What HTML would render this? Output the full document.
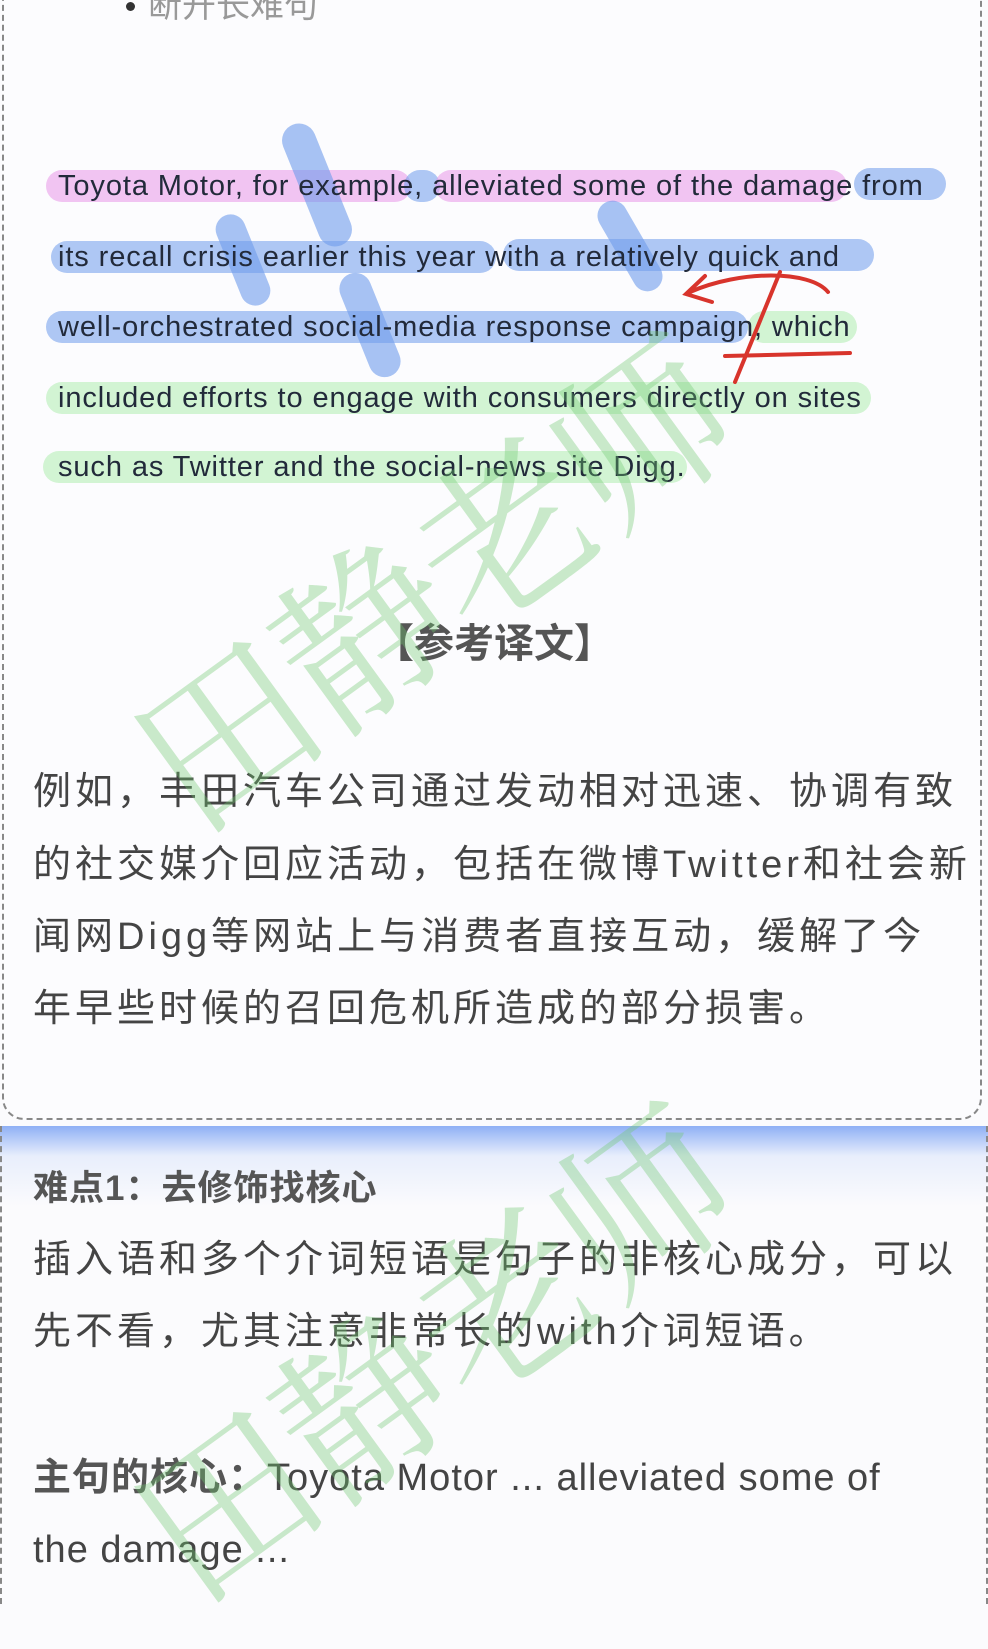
<!DOCTYPE html>
<html><head><meta charset="utf-8"><style>
body{margin:0;width:988px;height:1604px;overflow:hidden;background:#fbfbfd;position:relative;font-family:"Liberation Sans","Noto Sans CJK SC",sans-serif;}
.a{position:absolute;}
.card{left:2px;top:-20px;width:980px;height:1140px;border:2px dashed #888;border-top:none;border-radius:0 0 22px 22px;background:#fcfcfe;box-sizing:border-box;}
.hl{position:absolute;height:32px;border-radius:16px;}
.p{background:rgba(232,150,232,.55);}
.b{background:rgba(110,155,235,.55);}
.g{background:rgba(160,235,160,.45);}
.en{position:absolute;left:58px;font-size:29px;color:#222a3a;white-space:nowrap;letter-spacing:.9px;line-height:34px;}
.zh{position:absolute;left:33px;font-size:38px;color:#444;letter-spacing:4px;white-space:nowrap;line-height:46px;}
.sec{left:0;top:1126px;width:988px;height:478px;background:linear-gradient(#8fb0f5 0,#e8eefc 30px,#fbfbfd 80px);border-left:2px dashed #888;border-right:2px dashed #888;box-sizing:border-box;}
.wm{position:absolute;color:rgba(110,200,110,.36);font-family:"Noto Serif CJK SC",serif;font-size:175px;line-height:175px;white-space:nowrap;transform-origin:left center;letter-spacing:-4px;}
</style></head><body>
<div class="a card"></div>
<div class="a" style="left:126px;top:2px;width:9px;height:9px;border-radius:50%;background:#333"></div>
<div class="a" style="left:148px;top:-22px;font-size:34px;color:#999">断开长难句</div>

<div class="hl p" style="left:46px;top:170px;width:365px"></div>
<div class="hl b" style="left:404px;top:170px;width:36px"></div>
<div class="hl p" style="left:435px;top:170px;width:412px"></div>
<div class="hl b" style="left:854px;top:168px;width:92px"></div>
<div class="hl b" style="left:51px;top:241px;width:445px"></div>
<div class="hl b" style="left:503px;top:239px;width:371px"></div>
<div class="hl b" style="left:46px;top:311px;width:702px"></div>
<div class="hl g" style="left:748px;top:311px;width:109px"></div>
<div class="hl g" style="left:46px;top:382px;width:825px"></div>
<div class="hl g" style="left:43px;top:451px;width:644px"></div>
<div class="a" style="left:300px;top:120px;width:34px;height:130px;border-radius:17px;background:rgba(110,155,235,.6);transform:rotate(-22deg)"></div>
<div class="a" style="left:228px;top:212px;width:30px;height:96px;border-radius:15px;background:rgba(110,155,235,.6);transform:rotate(-22deg)"></div>
<div class="a" style="left:354px;top:270px;width:32px;height:110px;border-radius:16px;background:rgba(110,155,235,.6);transform:rotate(-22deg)"></div>
<div class="a" style="left:615px;top:196px;width:30px;height:100px;border-radius:15px;background:rgba(110,155,235,.6);transform:rotate(-30deg)"></div>

<div class="en" style="top:169px">Toyota Motor, for example, alleviated some of the damage from</div>
<div class="en" style="top:240px">its recall crisis earlier this year with a relatively quick and</div>
<div class="en" style="top:310px">well-orchestrated social-media response campaign, which</div>
<div class="en" style="top:381px">included efforts to engage with consumers directly on sites</div>
<div class="en" style="top:450px">such as Twitter and the social-news site Digg.</div>

<svg class="a" style="left:0;top:0" width="988" height="520"><g fill="none" stroke="#d8342c" stroke-width="4" stroke-linecap="round">
<path d="M828 292 C810 270 740 270 690 292"/><path d="M705 276 L686 294 L712 302"/><path d="M780 272 L735 382"/><path d="M725 356 L850 353"/></g></svg>

<div class="a" style="left:0;width:988px;top:616px;text-align:center;font-size:40px;font-weight:bold;color:#555;line-height:56px">【参考译文】</div>
<div class="zh" style="top:769px">例如，丰田汽车公司通过发动相对迅速、协调有致</div>
<div class="zh" style="top:842px">的社交媒介回应活动，包括在微博Twitter和社会新</div>
<div class="zh" style="top:914px">闻网Digg等网站上与消费者直接互动，缓解了今</div>
<div class="zh" style="top:986px">年早些时候的召回危机所造成的部分损害。</div>

<div class="a sec"></div>
<div class="zh" style="top:1166px;font-weight:bold;font-size:35px;color:#555;letter-spacing:1px">难点1：去修饰找核心</div>
<div class="zh" style="top:1237px">插入语和多个介词短语是句子的非核心成分，可以</div>
<div class="zh" style="top:1309px">先不看，尤其注意非常长的with介词短语。</div>
<div class="zh" style="top:1455px;letter-spacing:1px"><b style="color:#555">主句的核心：</b>Toyota Motor ... alleviated some of</div>
<div class="zh" style="top:1527px;letter-spacing:1px">the damage ...</div>

<div class="wm" style="left:150px;top:690px;transform:rotate(-36deg)">田静老师</div>
<div class="wm" style="left:150px;top:1460px;transform:rotate(-36deg)">田静老师</div>
</body></html>
